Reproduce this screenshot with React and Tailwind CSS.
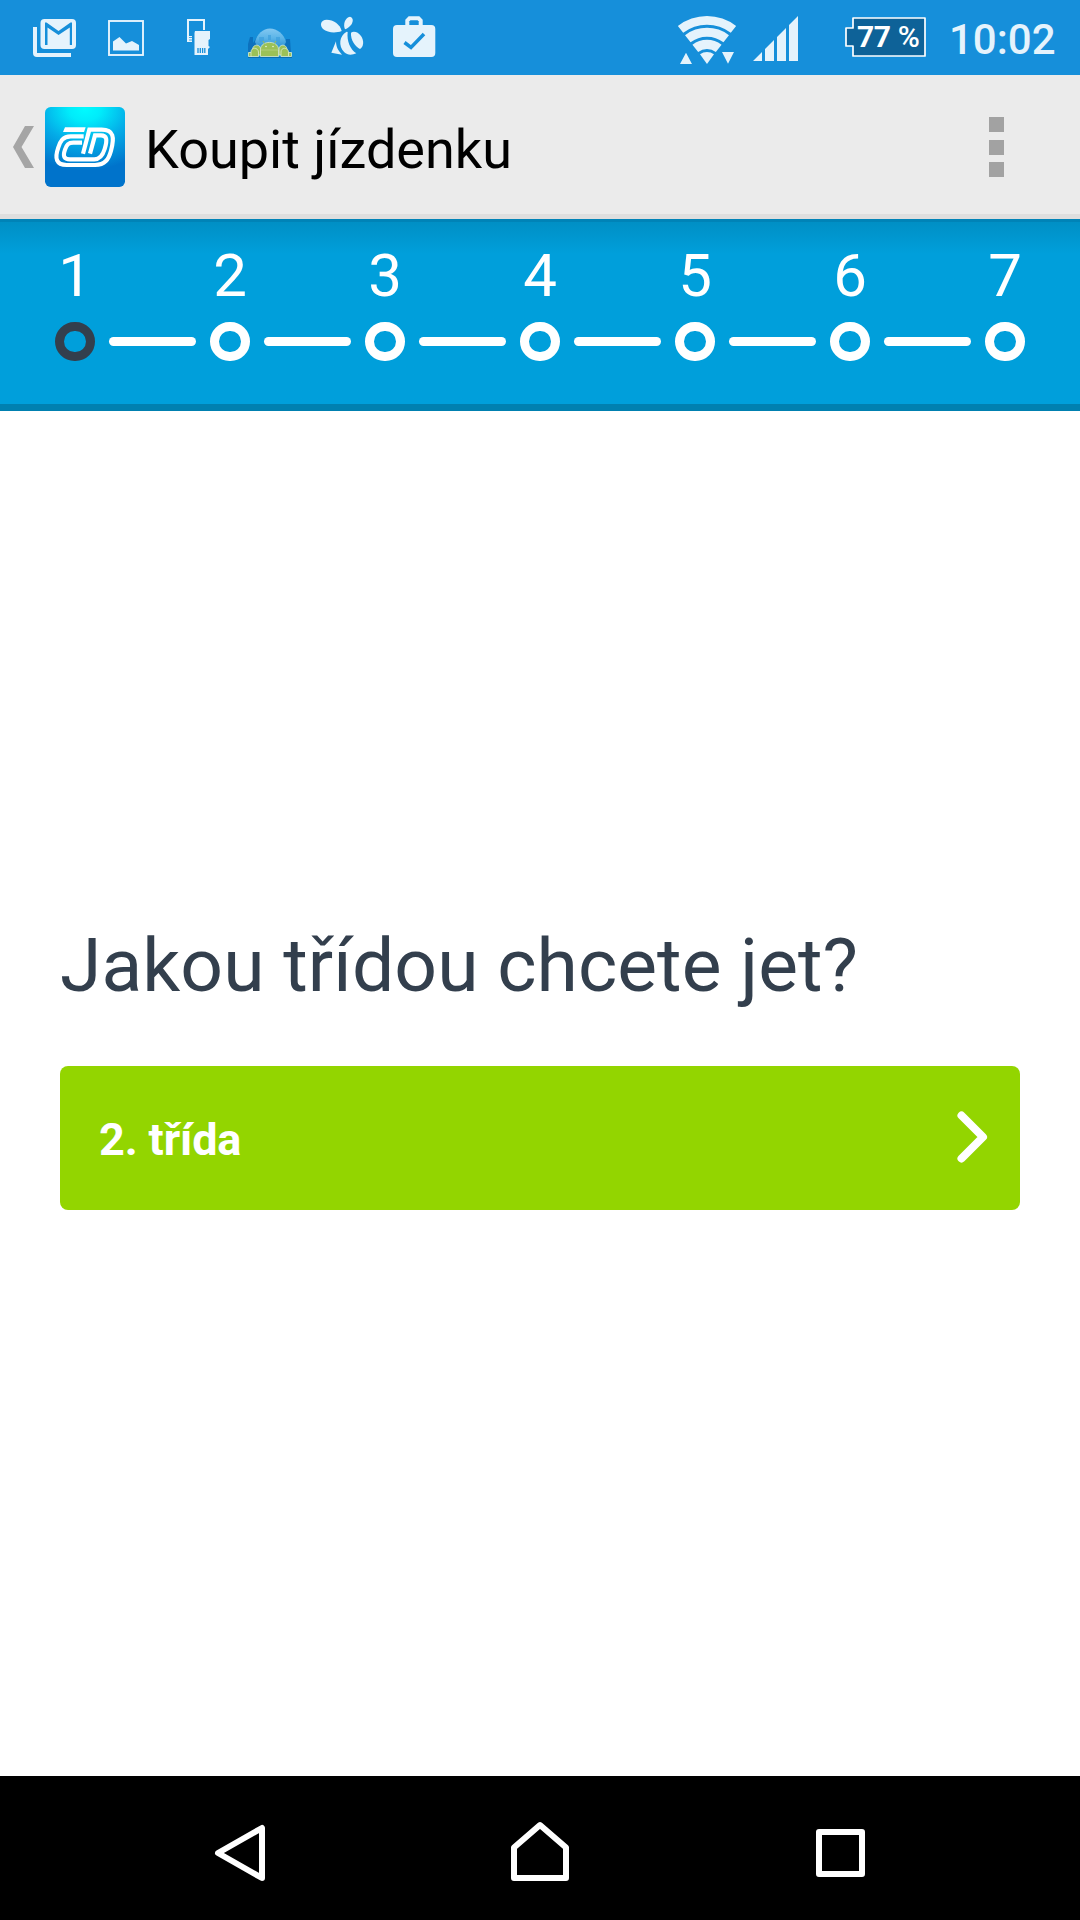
const steps = [1, 2, 3, 4, 5, 6, 7];

function GmailIcon() {
  return (
    <svg className="h-[75px] w-[72px]" viewBox="18 0 72 75" fill="#e5f3fc">
      <path d="M33 27h4v26h34v4H37a4 4 0 0 1-4-4z" />
      <rect x="40.5" y="19" width="35.5" height="30" rx="4" />
      <path
        d="M45 45V22.500h1.500L58.500 31 70.500 22.500H72V45h-2.200V27.500L58.500 35 47.500 27.500V45z"
        fill="#168fda"
      />
    </svg>
  );
}

function PictureIcon() {
  return (
    <svg className="h-[75px] w-[72px]" viewBox="90 0 72 75" fill="#e5f3fc">
      <rect x="109" y="21" width="34" height="34" fill="none" stroke="#e5f3fc" strokeWidth="1.900" />
      <path d="M113 50.500V41.500l6.500-4.500 6.500 6.500 6-2.500 7 4v5.500z" />
    </svg>
  );
}

function StorageIcon() {
  return (
    <svg className="h-[75px] w-[72px]" viewBox="162 0 72 75" fill="#e5f3fc">
      <path d="M187 19h18v11h-2v-9h-14v15h3v6h-5z" />
      <path d="M189 37.500h3M189 40h3" stroke="#168fda" strokeWidth="0.800" />
      <path d="M195 31h15v8l-1.500 1v6l1.500 1-2 2v6h-13.500V33z" />
      <path d="M198 48v5M200.300 48v5M202.600 48v5M204.800 48v5" stroke="#168fda" strokeWidth="1.300" />
    </svg>
  );
}

function AndroidWorldIcon() {
  return (
    <svg className="h-[75px] w-[72px]" viewBox="234 0 72 75">
      <defs>
        <linearGradient id="dome" x1="0" y1="0" x2="0" y2="1">
          <stop offset="0" stopColor="#83c8f1" />
          <stop offset="0.500" stopColor="#5ab4e8" />
          <stop offset="1" stopColor="#2a8fd2" />
        </linearGradient>
      </defs>
      <path d="M248 53v-9l2-7h3v6l4-6h26l3 4v-2h4l1 14z" fill="#0b6cb9" opacity="0.850" />
      <path d="M255 42c2-8 8-13.500 15-13.500S284 34 286 42l-3 6h-25z" fill="url(#dome)" />
      <path d="M259 37h5v5h-5zM268 35h3v5h-3zM276 37h4v6h-4z" fill="#3d9fdd" opacity="0.700" />
      <g fill="#9bc157" stroke="#dcebcc" strokeWidth="0.800">
        <path d="M248.500 56.500v-4h3v4zM288.500 56.500v-4h3v4z" />
        <path d="M252.500 50c0-6.500 8-6 8-1v6h-8zM279 55v-6c0-5 8-5.500 8 1v5z" />
        <path d="M251 56.500v-4.500c0-5 7-5 7.500 0v4.500zM281 56.500v-4.500c0-5 7-5 7.500 0v4.500z" />
        <path d="M260.500 56.500V49.500c0-9.500 18-9.500 18 0v7z" />
      </g>
      <path d="M264.500 43.500l-1.500-2.500M274.500 43.500l1.500-2.500" stroke="#9bc157" strokeWidth="1" />
      <circle cx="266" cy="46.500" r="0.700" fill="#fff" />
      <circle cx="273" cy="46.500" r="0.700" fill="#fff" />
      <path d="M261 50h17" stroke="#b9d58a" strokeWidth="0.700" />
      <path d="M248 57.500h44" stroke="#0c6fae" strokeWidth="1" />
    </svg>
  );
}

function BeeIcon() {
  return (
    <svg className="h-[75px] w-[72px]" viewBox="306 0 72 75" fill="#e5f3fc">
      <g transform="translate(230 0) scale(.33333)">
        <path d="M335 93C330 72 310 59 290 59C272 60 268 75 279 87C293 99 318 100 335 93Z" />
        <path d="M345 88C338 72 346 52 360 50C371 52 370 66 363 75C357 82 351 86 345 88Z" />
        <path d="M350 95C328 106 324 138 343 157C352 166 366 166 379 160C361 148 350 124 353 96Z" />
        <path d="M318 124L304 158L336 164C324 151 318 141 318 124Z" />
        <path d="M363 98C372 92 385 97 393 108C403 122 401 141 390 147C376 140 361 119 363 98Z" />
      </g>
    </svg>
  );
}

function WorkCheckIcon() {
  return (
    <svg className="h-[75px] w-[72px]" viewBox="378 0 72 75" fill="#e5f3fc">
      <rect x="393" y="25" width="42.300" height="32" rx="4" />
      <path d="M407.300 26v-5.500l2.200-2.200h9l2.200 2.200V26" fill="none" stroke="#e5f3fc" strokeWidth="4" />
      <path d="M404.500 42.500l6.500 5 13-13.500" fill="none" stroke="#168fda" strokeWidth="3.500" />
    </svg>
  );
}

function WifiIcon() {
  return (
    <svg className="h-[75px] w-[60px]" viewBox="677 0 60 75" fill="#e5f3fc">
      <g transform="translate(660 0) scale(.33333)">
        <path d="M53.600 78.100A142 142 0 0 1 228.400 78.100L212.400 98.600A116 116 0 0 0 69.600 98.600Z" />
        <path d="M75.100 105.700A107 107 0 0 1 206.900 105.700L190.300 127A80 80 0 0 0 91.700 127Z" />
        <path d="M97.300 134.100A71 71 0 0 1 184.700 134.100L167.500 156.100A43 43 0 0 0 114.500 156.100Z" />
        <path d="M120 163A34 34 0 0 1 162 163L141 192Z" />
        <path d="M60 192L78 158L96 192ZM186 156H222L204 191Z" />
      </g>
    </svg>
  );
}

function SignalIcon() {
  return (
    <svg className="ml-4 h-[75px] w-[45px]" viewBox="753 0 45 75" fill="#e5f3fc">
      <path d="M753 61l9-9v9zM765 61V49l9-9v21zM777 61V37l9-9v33zM789 61V25l9-9v45z" />
    </svg>
  );
}

function Battery() {
  return (
    <div className="relative ml-[47px] h-[75px] w-[81px]">
      <svg className="h-[75px] w-[81px]" viewBox="845 0 81 75">
        <path
          d="M853 18h72v38h-72V46h-7V28h7z"
          fill="#0e6298"
          stroke="#fff"
          strokeWidth="1.700"
          strokeLinejoin="round"
        />
      </svg>
      <span className="absolute top-[19px] left-[12px] text-[30px] leading-[36px] font-bold tracking-[-0.4px] whitespace-nowrap text-white">
        77 <span className="font-medium">%</span>
      </span>
    </div>
  );
}

function StatusBar() {
  return (
    <header className="flex h-[75px] bg-[#168fda] pl-[18px]">
      <GmailIcon />
      <PictureIcon />
      <StorageIcon />
      <AndroidWorldIcon />
      <BeeIcon />
      <WorkCheckIcon />
      <div className="ml-[227px] flex">
        <WifiIcon />
        <SignalIcon />
        <Battery />
      </div>
      <time className="mt-[15px] ml-[23px] text-[42px] leading-[50px] font-medium text-[#e5f3fc]">
        10:02
      </time>
    </header>
  );
}

function AppLogo() {
  return (
    <svg className="ml-[11px] size-20" viewBox="15 9 240 240">
      <defs>
        <radialGradient
          id="logo"
          gradientUnits="userSpaceOnUse"
          cx="0"
          cy="0"
          r="1"
          gradientTransform="translate(135 14) scale(240 185)"
        >
          <stop offset="0" stopColor="#00fbff" />
          <stop offset="0.200" stopColor="#00ecfb" />
          <stop offset="0.550" stopColor="#04ade8" />
          <stop offset="1" stopColor="#0073cb" />
        </radialGradient>
      </defs>
      <rect x="15" y="9" width="240" height="240" rx="17" fill="url(#logo)" />
      <path d="M75 70h62l-5 14H69z" fill="#fff" />
      <g fill="none" stroke="#fff" strokeWidth="12.500">
        <path d="M131 97H92C68 97 61 112 55 130C43 164 49 183 80 183H165C195 183 206 166 213 140C224 100 221 77 185 77H148L129 149" />
        <path d="M126 116H100C85 116 80 122 75 137C68 157 72 166 90 166H163C180 166 188 155 194 135C203 105 200 94 183 94H165L150 149" />
      </g>
    </svg>
  );
}

function ActionBar() {
  return (
    <div className="flex h-36 items-start border-b-[5px] border-[#dedede] bg-[#ebebeb] pl-[13px]">
      <div className="flex h-36 items-center">
        <svg className="h-[42px] w-[21px]" viewBox="0 0 21 42" fill="#a5a5a5">
          <path d="M12 0h9L8.500 21 21 42h-9L0 21z" />
        </svg>
        <AppLogo />
        <h1 className="ml-5 pt-1.5 text-[54px] leading-[64px] text-black">Koupit jízdenku</h1>
      </div>
      <div className="mt-[42px] mr-[76px] ml-auto flex flex-col gap-[7.5px]">
        <span className="size-[15px] bg-[#a2a2a2]" />
        <span className="size-[15px] bg-[#a2a2a2]" />
        <span className="size-[15px] bg-[#a2a2a2]" />
      </div>
    </div>
  );
}

function Stepper() {
  return (
    <div className="h-48 border-b-[7px] border-[#0080b0] bg-[#009fdb]">
      <div className="h-[3px] bg-[#0083b7]" />
      <div className="h-[182px] bg-linear-to-b from-[#008fc5] to-[#009fdb] to-[32px] pl-[55px]">
        <ol className="flex">
          {steps.map((step) => (
            <li key={step} className="flex w-[155px] shrink-0 flex-col pt-[19px] last:w-10">
              <span className="w-10 text-center text-[60px] leading-[70px] text-white">{step}</span>
              <div className="mt-[11px] flex items-center gap-[14px]">
                <span
                  className={
                    step === 1
                      ? "h-[39px] w-10 rounded-full border-[9px] border-[#333f4d]"
                      : "h-[39px] w-10 rounded-full border-[9px] border-white"
                  }
                />
                {step < 7 && <span className="h-[9px] w-[87px] rounded-full bg-white" />}
              </div>
            </li>
          ))}
        </ol>
      </div>
    </div>
  );
}

function NavBar() {
  return (
    <nav className="flex h-36 items-center bg-black pl-[210px]">
      <svg className="h-36 w-[60px]" viewBox="210 1776 60 144" fill="none" stroke="#fff" strokeWidth="6" strokeLinejoin="round">
        <path d="M262 1828v50l-44-25z" />
      </svg>
      <svg className="ml-60 h-36 w-[60px]" viewBox="510 1776 60 144" fill="none" stroke="#fff" strokeWidth="6" strokeLinejoin="round">
        <path d="M514 1878v-30.500l26-22.500 26 22.500V1878z" />
      </svg>
      <svg className="ml-60 h-36 w-[60px]" viewBox="810 1776 60 144" fill="none" stroke="#fff" strokeWidth="6" strokeLinejoin="round">
        <path d="M819 1832h43v42h-43z" />
      </svg>
    </nav>
  );
}

function App() {
  return (
    <div className="flex h-[1920px] w-[1080px] flex-col overflow-hidden bg-white font-['Roboto',sans-serif]">
      <StatusBar />
      <ActionBar />
      <Stepper />
      <main className="flex-1 px-[60px] pt-[510px]">
        <h2 className="text-[75px] leading-[88px] tracking-[0.06px] whitespace-nowrap text-[#333f4d]">
          Jakou třídou chcete jet?
        </h2>
        <button className="mt-[57px] flex h-36 w-full items-center justify-between rounded-[8px] bg-[#93d500] pr-8 pl-[39px] text-[45px] font-bold tracking-[-0.15px] text-white">
          <span className="pt-[3px]">2. třída</span>
          <svg
            className="mb-0.5 h-[52px] w-[31px]"
            viewBox="0 0 31 52"
            fill="none"
            stroke="#fff"
            strokeWidth="8"
            strokeLinecap="round"
            strokeLinejoin="round"
          >
            <path d="M4.500 4.500L26 26 4.500 47.500" />
          </svg>
        </button>
      </main>
      <NavBar />
    </div>
  );
}

export default App;
